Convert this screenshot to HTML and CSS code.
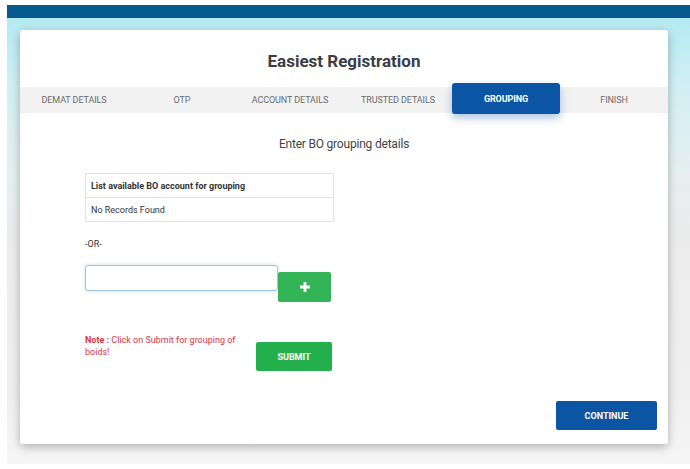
FILE: index.html
```html
<!DOCTYPE html>
<html lang="en">
<head>
<meta charset="utf-8">
<title>Easiest Registration</title>
<link rel="stylesheet" href="styles.css">
</head>
<body>
<div class="page">
  <div class="topbar"></div>
  <div class="backdrop">
    <div class="card">
      <h1 class="title">Easiest Registration</h1>
      <nav class="tabs">
        <div class="tab">DEMAT DETAILS</div>
        <div class="tab">OTP</div>
        <div class="tab">ACCOUNT DETAILS</div>
        <div class="tab">TRUSTED DETAILS</div>
        <div class="tab tab-active">GROUPING</div>
        <div class="tab">FINISH</div>
      </nav>
      <div class="content">
        <p class="lead">Enter BO grouping details</p>
        <div class="form">
          <table class="bo-table">
            <tr><th>List available BO account for grouping</th></tr>
            <tr><td>No Records Found</td></tr>
          </table>
          <div class="or">-OR-</div>
          <div class="add-row">
            <input class="bo-input" type="text">
            <button class="btn btn-green btn-add" type="button">
              <svg width="10" height="10" viewBox="0 0 10 10"><path d="M3.6 0h2.8v3.6H10v2.8H6.4V10H3.6V6.4H0V3.6h3.6z" fill="#fff"/></svg>
            </button>
          </div>
          <div class="submit-row">
            <p class="note"><b>Note :</b> Click on Submit for grouping of boids!</p>
            <button class="btn btn-green btn-submit" type="button">SUBMIT</button>
          </div>
        </div>
        <div class="footer">
          <button class="btn btn-blue btn-continue" type="button">CONTINUE</button>
        </div>
      </div>
    </div>
  </div>
</div>
</body>
</html>
```
FILE: styles.css
```css
html, body {
  margin: 0;
  padding: 0;
  background: #fff;
}
body {
  font-family: Roboto, "Liberation Sans", Arial, sans-serif;
  width: 690px;
  height: 469px;
  overflow: hidden;
}
.page {
  padding-top: 5px;
  padding-left: 7px;
}
.topbar {
  height: 13px;
  background: #07598e;
}
.backdrop {
  background: linear-gradient(180deg, #b4eaf2 0px, #d2eff4 70px, #e6eff1 150px, #ececec 220px, #f0f0f0 380px, #f6f6f6 451px);
  padding: 12px 22px 20px 13px;
}
.card {
  background: #fff;
  height: 414px;
  border-radius: 3px;
  box-shadow: 0 3px 10px rgba(0, 0, 0, 0.28);
  display: flex;
  flex-direction: column;
}
.title {
  margin: 0;
  padding-top: 21px;
  height: 36px;
  text-align: center;
  font-size: 17px;
  line-height: 20px;
  font-weight: 700;
  color: #3a3d46;
}
.tabs {
  display: grid;
  grid-template-columns: repeat(6, 1fr);
  height: 26px;
  background: #f2f2f2;
}
.tab {
  display: flex;
  align-items: center;
  justify-content: center;
  font-size: 9px;
  color: #6b6b6b;
  letter-spacing: -0.1px;
}
.tab-active {
  margin: -4px 0 -1px 0;
  background: #0b55a4;
  color: #fff;
  font-weight: 700;
  border-radius: 3px;
  box-shadow: 0 4px 8px rgba(11, 85, 164, 0.35);
  position: relative;
}
.content {
  flex: 1;
  display: flex;
  flex-direction: column;
}
.lead {
  margin: 24px 0 0;
  text-align: center;
  font-size: 12px;
  line-height: 14px;
  color: #444;
  letter-spacing: -0.2px;
}
.form {
  padding-left: 65px;
  flex: 1;
}
.bo-table {
  margin-top: 22px;
  width: 249px;
  border-collapse: collapse;
  font-size: 9px;
  color: #333;
}
.bo-table th,
.bo-table td {
  border: 1px solid #e2e2e2;
  height: 23px;
  padding: 0 5px;
  text-align: left;
}
.bo-table th {
  font-weight: 700;
}
.or {
  margin-top: 17px;
  font-size: 9px;
  line-height: 11px;
  color: #333;
}
.add-row {
  display: flex;
  align-items: flex-start;
  margin-top: 15px;
}
.bo-input {
  box-sizing: border-box;
  width: 193px;
  height: 26px;
  margin: 0;
  border: 1px solid #9fc3e6;
  border-radius: 3px;
  box-shadow: 0 0 4px rgba(102, 160, 220, 0.35);
  outline: none;
}
.btn {
  border: none;
  margin: 0;
  padding: 0;
  font-family: inherit;
  color: #fff;
  font-weight: 700;
  font-size: 9px;
  border-radius: 2px;
  display: flex;
  align-items: center;
  justify-content: center;
}
.btn-green {
  background: #23b04c;
}
.btn-blue {
  background: #0b55a4;
}
.btn-add {
  width: 53px;
  height: 30px;
  margin-top: 7px;
  background: #32b457;
}
.submit-row {
  display: flex;
  align-items: flex-start;
  margin-top: 32px;
}
.note {
  margin: 0;
  width: 160px;
  font-size: 9px;
  line-height: 12px;
  color: #e2323a;
}
.note b {
  font-weight: 700;
}
.btn-submit {
  width: 76px;
  height: 29px;
  margin-left: 11px;
  margin-top: 8px;
}
.footer {
  display: flex;
  justify-content: flex-end;
  padding: 0 11px 14px 0;
}
.btn-continue {
  width: 101px;
  height: 29px;
}
```
